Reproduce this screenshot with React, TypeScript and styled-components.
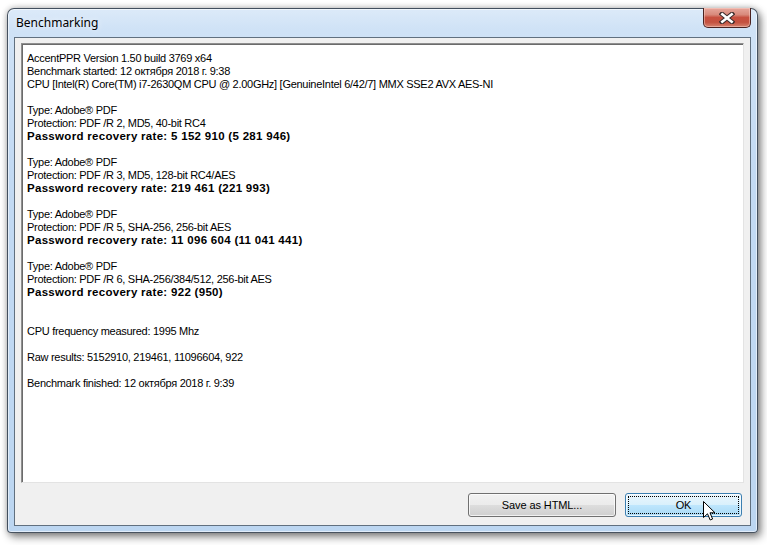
import React from "react";
import styled, { createGlobalStyle } from "styled-components";

const Global = createGlobalStyle`
  html, body { margin: 0; padding: 0; background: #ffffff; }
  body { width: 767px; height: 545px; overflow: hidden; }
`;

const Window = styled.div`
  position: relative;
  box-sizing: border-box;
  margin: 8px 0 0 7px;
  width: 751px;
  height: 525px;
  display: flex;
  flex-direction: column;
  padding: 0 6px 6px 6px;
  border: 1px solid rgba(45, 55, 68, 0.85);
  border-radius: 7px 7px 4px 4px;
  background: linear-gradient(180deg, #dceaf9 0%, #cfe2f6 4%, #c3daf3 30%, #bcd6f1 100%);
  box-shadow: inset 0 0 0 1px rgba(255, 255, 255, 0.55), 3px 4px 9px rgba(0, 0, 0, 0.45),
    0 0 6px rgba(0, 0, 0, 0.25);
`;

const TitleBar = styled.div`
  height: 28px;
  display: flex;
  justify-content: space-between;
  align-items: flex-start;
`;

const Title = styled.div`
  font-family: "Noto Sans", "Open Sans", sans-serif;
  font-size: 12px;
  color: #000;
  line-height: 16px;
  margin: 6px 0 0 2px;
  text-shadow: 0 0 6px rgba(255, 255, 255, 0.9);
`;

const CloseButton = styled.div`
  box-sizing: border-box;
  width: 48px;
  height: 20px;
  margin: -1px 0 0 0;
  border: 1px solid #4a2220;
  border-top: none;
  border-radius: 0 0 5px 5px;
  background: linear-gradient(180deg, #e7a79c 0%, #d88a7c 35%, #c75040 50%, #c4513f 75%, #d5836f 100%);
  box-shadow: inset 0 0 0 1px rgba(255, 220, 210, 0.45);
  display: flex;
  align-items: center;
  justify-content: center;
`;

const Client = styled.div`
  flex: 1;
  box-sizing: border-box;
  display: flex;
  flex-direction: column;
  border: 1px solid #61707f;
  background: #f0f0f0;
  padding: 5px 6px 8px 6px;
  gap: 10px;
`;

const TextBox = styled.div`
  flex: 1;
  box-sizing: border-box;
  background: #ffffff;
  border: 1px solid;
  border-color: #8f8f8f #e3e3e3 #e3e3e3 #8f8f8f;
  box-shadow: inset 1px 1px 0 #6b6b6b;
  padding: 8px 5px 0 5px;
  font-family: "Liberation Sans", Arial, sans-serif;
  font-size: 11px;
  color: #000;
`;

const Line = styled.div<{ $bold?: boolean }>`
  height: 13px;
  line-height: 13px;
  white-space: pre;
  font-size: ${(p) => (p.$bold ? "11.5px" : "11px")};
  font-weight: ${(p) => (p.$bold ? 700 : 400)};
  letter-spacing: ${(p) => (p.$bold ? "0.3px" : "-0.28px")};
`;

const ButtonRow = styled.div`
  display: flex;
  justify-content: flex-end;
  gap: 9px;
  margin-right: 2px;
  height: 24px;
`;

const Button = styled.div<{ $default?: boolean; $w: number }>`
  position: relative;
  box-sizing: border-box;
  width: ${(p) => p.$w}px;
  height: 24px;
  border-radius: 3px;
  border: 1px solid ${(p) => (p.$default ? "#3c7fb1" : "#707070")};
  background: ${(p) =>
    p.$default
      ? "linear-gradient(180deg, #eaf6fd 0%, #d9f0fc 50%, #bee6fd 51%, #a7d9f5 100%)"
      : "linear-gradient(180deg, #f2f2f2 0%, #ebebeb 50%, #dddddd 51%, #cfcfcf 100%)"};
  box-shadow: inset 0 0 0 1px rgba(255, 255, 255, 0.7);
  display: flex;
  align-items: center;
  justify-content: center;
  font-family: "Liberation Sans", Arial, sans-serif;
  font-size: 11px;
  color: #000;
  letter-spacing: -0.1px;
`;

const FocusRect = styled.div`
  position: absolute;
  inset: 2px;
  border: 1px dotted #000;
`;

const Cursor = styled.svg`
  position: absolute;
  left: 703px;
  top: 501px;
  pointer-events: none;
`;

type L = { t: string; b?: boolean };

const lines: L[] = [
  { t: "AccentPPR Version 1.50 build 3769 x64" },
  { t: "Benchmark started: 12 октября 2018 г. 9:38" },
  { t: "CPU [Intel(R) Core(TM) i7-2630QM CPU @ 2.00GHz] [GenuineIntel 6/42/7] MMX SSE2 AVX AES-NI" },
  { t: "" },
  { t: "Type: Adobe® PDF" },
  { t: "Protection: PDF /R 2, MD5, 40-bit RC4" },
  { t: "Password recovery rate: 5 152 910 (5 281 946)", b: true },
  { t: "" },
  { t: "Type: Adobe® PDF" },
  { t: "Protection: PDF /R 3, MD5, 128-bit RC4/AES" },
  { t: "Password recovery rate: 219 461 (221 993)", b: true },
  { t: "" },
  { t: "Type: Adobe® PDF" },
  { t: "Protection: PDF /R 5, SHA-256, 256-bit AES" },
  { t: "Password recovery rate: 11 096 604 (11 041 441)", b: true },
  { t: "" },
  { t: "Type: Adobe® PDF" },
  { t: "Protection: PDF /R 6, SHA-256/384/512, 256-bit AES" },
  { t: "Password recovery rate: 922 (950)", b: true },
  { t: "" },
  { t: "" },
  { t: "CPU frequency measured: 1995 Mhz" },
  { t: "" },
  { t: "Raw results: 5152910, 219461, 11096604, 922" },
  { t: "" },
  { t: "Benchmark finished: 12 октября 2018 г. 9:39" },
];

export default function App() {
  return (
    <>
      <Global />
      <Window>
        <TitleBar>
          <Title>Benchmarking</Title>
          <CloseButton>
            <svg width="16" height="12" viewBox="0 0 16 12">
              <path d="M3 2 L13 10 M13 2 L3 10" stroke="#3a2a2a" strokeWidth="4.6" strokeLinecap="square" />
              <path d="M3.3 2.3 L12.7 9.7 M12.7 2.3 L3.3 9.7" stroke="#ffffff" strokeWidth="2.6" strokeLinecap="square" />
            </svg>
          </CloseButton>
        </TitleBar>
        <Client>
          <TextBox>
            {lines.map((l, i) => (
              <Line key={i} $bold={l.b}>
                {l.t}
              </Line>
            ))}
          </TextBox>
          <ButtonRow>
            <Button $w={148}>Save as HTML...</Button>
            <Button $w={117} $default>
              <FocusRect />
              OK
            </Button>
          </ButtonRow>
        </Client>
      </Window>
      <Cursor width="14" height="22" viewBox="0 0 14 22">
        <polygon
          points="0.5,0.5 0.5,16.5 4.5,12.8 7.2,19 9.6,18 7,11.8 12,11.8"
          fill="#ffffff"
          stroke="#000000"
          strokeWidth="1"
          strokeLinejoin="miter"
        />
      </Cursor>
    </>
  );
}
